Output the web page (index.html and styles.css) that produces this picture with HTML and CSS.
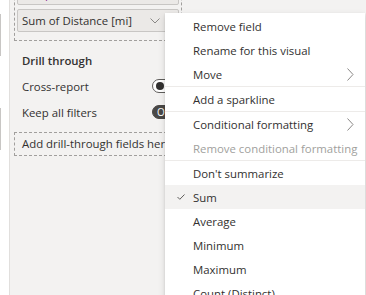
FILE: index.html
```html
<!DOCTYPE html>
<html lang="en">
<head>
  <meta charset="utf-8" />
  <meta name="viewport" content="width=device-width, initial-scale=1.0" />
  <title>Field menu</title>
  <link rel="stylesheet" href="styles.css">
</head>
<body>

  <div class="app">
    <div class="rail">
      <span class="rail-mark rail-mark-top"></span>
      <span class="rail-mark rail-mark-bottom"></span>
    </div>

    <div class="pane">
      <div class="well">
        <div class="pill">
          <span class="pill-label measure">Sample</span>
        </div>
        <div class="pill">
          <span class="pill-label">Sum of Distance [mi]</span>
          <svg class="pill-chevron" width="10" height="6" viewBox="0 0 10 6">
            <path d="M0.5 0.5 L5 5 L9.5 0.5" fill="none" stroke="#8a8886" stroke-width="1" />
          </svg>
        </div>
      </div>

      <div class="section">
        <div class="section-title">Drill through</div>
        <div class="row">
          <span>Cross-report</span>
          <span class="toggle"><span class="knob"></span><span class="toggle-text">Off</span></span>
        </div>
        <div class="row">
          <span>Keep all filters</span>
          <span class="toggle on"><span class="toggle-text">On</span><span class="knob"></span></span>
        </div>
      </div>

      <div class="drop">Add drill-through fields here</div>
    </div>
  </div>

  <!-- context menu for the field -->
  <div class="menu">
    <div class="item"><span class="check"></span><span class="label">Remove field</span></div>
    <div class="item"><span class="check"></span><span class="label">Rename for this visual</span></div>
    <div class="item">
      <span class="check"></span><span class="label">Move</span>
      <svg class="sub" width="7" height="13" viewBox="0 0 7 13"><path d="M0.5 0.5 L6 6.5 L0.5 12.5" fill="none" stroke="#8a8886" stroke-width="1" /></svg>
    </div>
    <div class="divider"></div>
    <div class="item"><span class="check"></span><span class="label">Add a sparkline</span></div>
    <div class="divider"></div>
    <div class="item">
      <span class="check"></span><span class="label">Conditional formatting</span>
      <svg class="sub" width="7" height="13" viewBox="0 0 7 13"><path d="M0.5 0.5 L6 6.5 L0.5 12.5" fill="none" stroke="#8a8886" stroke-width="1" /></svg>
    </div>
    <div class="item disabled"><span class="check"></span><span class="label">Remove conditional formatting</span></div>
    <div class="divider"></div>
    <div class="item"><span class="check"></span><span class="label">Don't summarize</span></div>
    <div class="item selected">
      <span class="check">
        <svg width="8" height="6" viewBox="0 0 8 6"><path d="M0.5 3 L2.8 5.3 L7.5 0.5" fill="none" stroke="#605e5c" stroke-width="1" /></svg>
      </span>
      <span class="label">Sum</span>
    </div>
    <div class="item"><span class="check"></span><span class="label">Average</span></div>
    <div class="item"><span class="check"></span><span class="label">Minimum</span></div>
    <div class="item"><span class="check"></span><span class="label">Maximum</span></div>
    <div class="item"><span class="check"></span><span class="label">Count (Distinct)</span></div>
  </div>

</body>
</html>
```

FILE: styles.css
```css
html, body {
  margin: 0;
  height: 100%;
  overflow: hidden;
}

body {
  font-family: "Open Sans", "Noto Sans", sans-serif;
  font-size: 11.4px;
  color: #323130;
  background: white;
  position: relative;
}

.app {
  display: flex;
  height: 100%;
}

/* thin strip of the canvas on the left */
.rail {
  width: 9px;
  flex: none;
  display: flex;
  flex-direction: column;
}

.rail-mark {
  width: 1px;
  background: #c8c6c4;
}

.rail-mark-top {
  height: 42px;
  margin-top: 14px;
}

.rail-mark-bottom {
  height: 42px;
  margin-top: 52px;
}

.pane {
  flex: 1;
  background: #f3f2f1;
  border-left: 1px solid #e1dfdd;
  padding-left: 4px;
}

.well {
  width: 162px;
  margin-top: -23px;
  border: 1px dashed #a19f9d;
  padding: 4px 2px 8px 2px;
  display: flex;
  flex-direction: column;
  gap: 4px;
}

.pill {
  height: 23px;
  box-sizing: border-box;
  background: #ebe9e7;
  border: 1px solid #c8c6c4;
  border-radius: 2px;
  display: flex;
  align-items: center;
  justify-content: space-between;
  padding: 0 18px 0 4px;
}

.pill-label {
  line-height: 20px;
}

.measure {
  color: #8b2b8f;
}

.pill-chevron {
  display: block;
}

.section {
  padding-left: 8px;
  margin-top: 10px;
}

.section-title {
  font-weight: 600;
  line-height: 20px;
  margin-bottom: 2px;
}

.row {
  height: 26px;
  display: grid;
  grid-template-columns: 130px auto;
  align-items: center;
}

.toggle {
  width: 40px;
  height: 14px;
  box-sizing: border-box;
  border: 1px solid #605e5c;
  border-radius: 7px;
  background: white;
  display: flex;
  align-items: center;
  gap: 3px;
  padding: 0 3px;
  font-size: 10px;
}

.toggle .knob {
  width: 8px;
  height: 8px;
  border-radius: 50%;
  background: #323130;
  flex: none;
}

.toggle.on {
  background: #4a4846;
  border-color: #4a4846;
  color: white;
  padding-left: 4px;
}

.toggle.on .knob {
  background: white;
}

.drop {
  width: 168px;
  height: 24px;
  box-sizing: border-box;
  margin-top: 7px;
  border: 1px dashed #a19f9d;
  padding-left: 7px;
  line-height: 22px;
  white-space: nowrap;
  overflow: hidden;
}

.menu {
  position: absolute;
  left: 165px;
  top: 13px;
  width: 200px;
  height: 300px;
  background: white;
  padding-top: 1px;
  box-shadow: 0 3px 7px rgba(0, 0, 0, 0.13), 0 0.6px 2px rgba(0, 0, 0, 0.11);
}

.item {
  height: 24px;
  display: flex;
  align-items: center;
  padding-right: 11px;
  white-space: nowrap;
}

.item .check {
  width: 28px;
  flex: none;
  display: flex;
  align-items: center;
  padding-left: 12px;
  box-sizing: border-box;
}

.item .label {
  flex: 1;
}

.item.selected {
  background: #f3f2f1;
}

.item.disabled {
  color: #a19f9d;
}

.divider {
  height: 1px;
  background: #edebe9;
}
```
